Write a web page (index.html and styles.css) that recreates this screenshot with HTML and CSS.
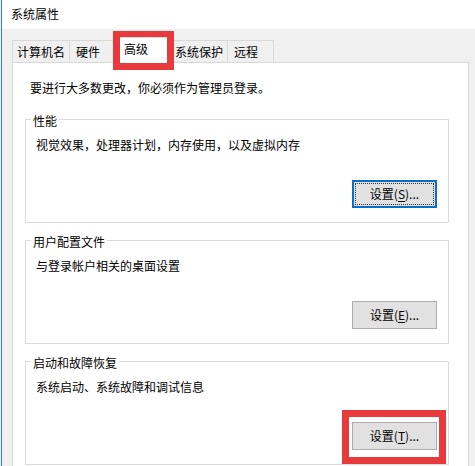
FILE: index.html
```html
<!DOCTYPE html>
<html lang="zh-CN">
<head>
<meta charset="utf-8">
<title>系统属性</title>
<link rel="stylesheet" href="styles.css">
</head>
<body>
<div class="window">
  <div class="titlebar">系统属性</div>
  <div class="content">
    <div class="tabs">
      <div class="tab">计算机名</div>
      <div class="tab">硬件</div>
      <div class="tab selected">高级</div>
      <div class="tab">系统保护</div>
      <div class="tab">远程</div>
      <div class="mark mark-tab"></div>
    </div>
    <div class="panel">
      <p class="intro">要进行大多数更改，你必须作为管理员登录。</p>
      <div class="group first">
        <div class="legend"><span>性能</span></div>
        <div class="desc">视觉效果，处理器计划，内存使用，以及虚拟内存</div>
        <div class="btn focused">设置(<u>S</u>)...</div>
      </div>
      <div class="group">
        <div class="legend"><span>用户配置文件</span></div>
        <div class="desc">与登录帐户相关的桌面设置</div>
        <div class="btn">设置(<u>E</u>)...</div>
      </div>
      <div class="group">
        <div class="legend"><span>启动和故障恢复</span></div>
        <div class="desc">系统启动、系统故障和调试信息</div>
        <div class="btn">设置(<u>T</u>)...</div>
        <div class="mark mark-btn"></div>
      </div>
    </div>
  </div>
</div>
</body>
</html>
```
FILE: styles.css
```css
html, body {
  margin: 0;
  padding: 0;
}
body {
  width: 475px;
  height: 466px;
  overflow: hidden;
  background: #f0f0f0;
  font-family: "Noto Sans CJK SC", "Liberation Sans", sans-serif;
  font-size: 12px;
  line-height: 16px;
  color: #000;
}
.window {
  height: 466px;
  margin-left: 1px;
  border-left: 1px solid #2f7fd4;
  background: #f0f0f0;
}
.titlebar {
  height: 29px;
  background: #fff;
  padding-left: 9px;
  line-height: 28px;
  font-size: 12px;
}
.content {
  padding: 8px 0 0 10px;
}
.tabs {
  position: relative;
  display: flex;
  align-items: flex-end;
  height: 25px;
}
.tab {
  box-sizing: border-box;
  height: 22px;
  min-width: 47px;
  padding: 0 4px 0 6px;
  border: 1px solid #d9d9d9;
  border-bottom: none;
  margin-left: -1px;
  line-height: 21px;
  background: #f0f0f0;
  white-space: nowrap;
}
.tab:first-child {
  margin-left: 0;
  padding-left: 4px;
}
.tab.selected {
  position: relative;
  z-index: 1;
  height: 26px;
  min-width: 54px;
  margin-bottom: -1px;
  padding: 1px 4px 0 8px;
  line-height: 20px;
  background: #fff;
}
.panel {
  box-sizing: border-box;
  width: 457px;
  height: 420px;
  border: 1px solid #d9d9d9;
  background: #fff;
}
.intro {
  margin: 0;
  padding: 17px 0 0 17px;
}
.group {
  position: relative;
  box-sizing: border-box;
  width: 424px;
  height: 104px;
  margin: 17px 0 0 12px;
  border: 1px solid #dcdcdc;
  display: flex;
  flex-direction: column;
}
.group.first {
  margin-top: 23px;
}
.legend {
  align-self: flex-start;
  margin: -7px 0 0 5px;
}
.legend span {
  padding: 0 2px;
  background: #fff;
}
.desc {
  margin-top: 8px;
  padding-left: 10px;
}
.btn {
  box-sizing: border-box;
  align-self: flex-end;
  width: 85px;
  height: 28px;
  margin: auto 11px 14px 0;
  border: 1px solid #adadad;
  background: #e1e1e1;
  text-align: center;
  line-height: 26px;
}
.btn u {
  text-decoration-thickness: 1px;
  text-underline-offset: 2px;
}
.btn.focused {
  border-color: #0a6fc9;
  box-shadow: inset 0 0 0 1px #0a6fc9;
  outline: 1px dotted #333;
  outline-offset: -4px;
}
.mark {
  position: absolute;
  box-sizing: border-box;
  border: 7px solid #e8393c;
  z-index: 5;
}
.mark-tab {
  left: 101px;
  top: -6px;
  width: 61px;
  height: 39px;
  border-top-width: 6px;
}
.mark-btn {
  left: 316px;
  top: 48px;
  width: 104px;
  height: 54px;
}
```
